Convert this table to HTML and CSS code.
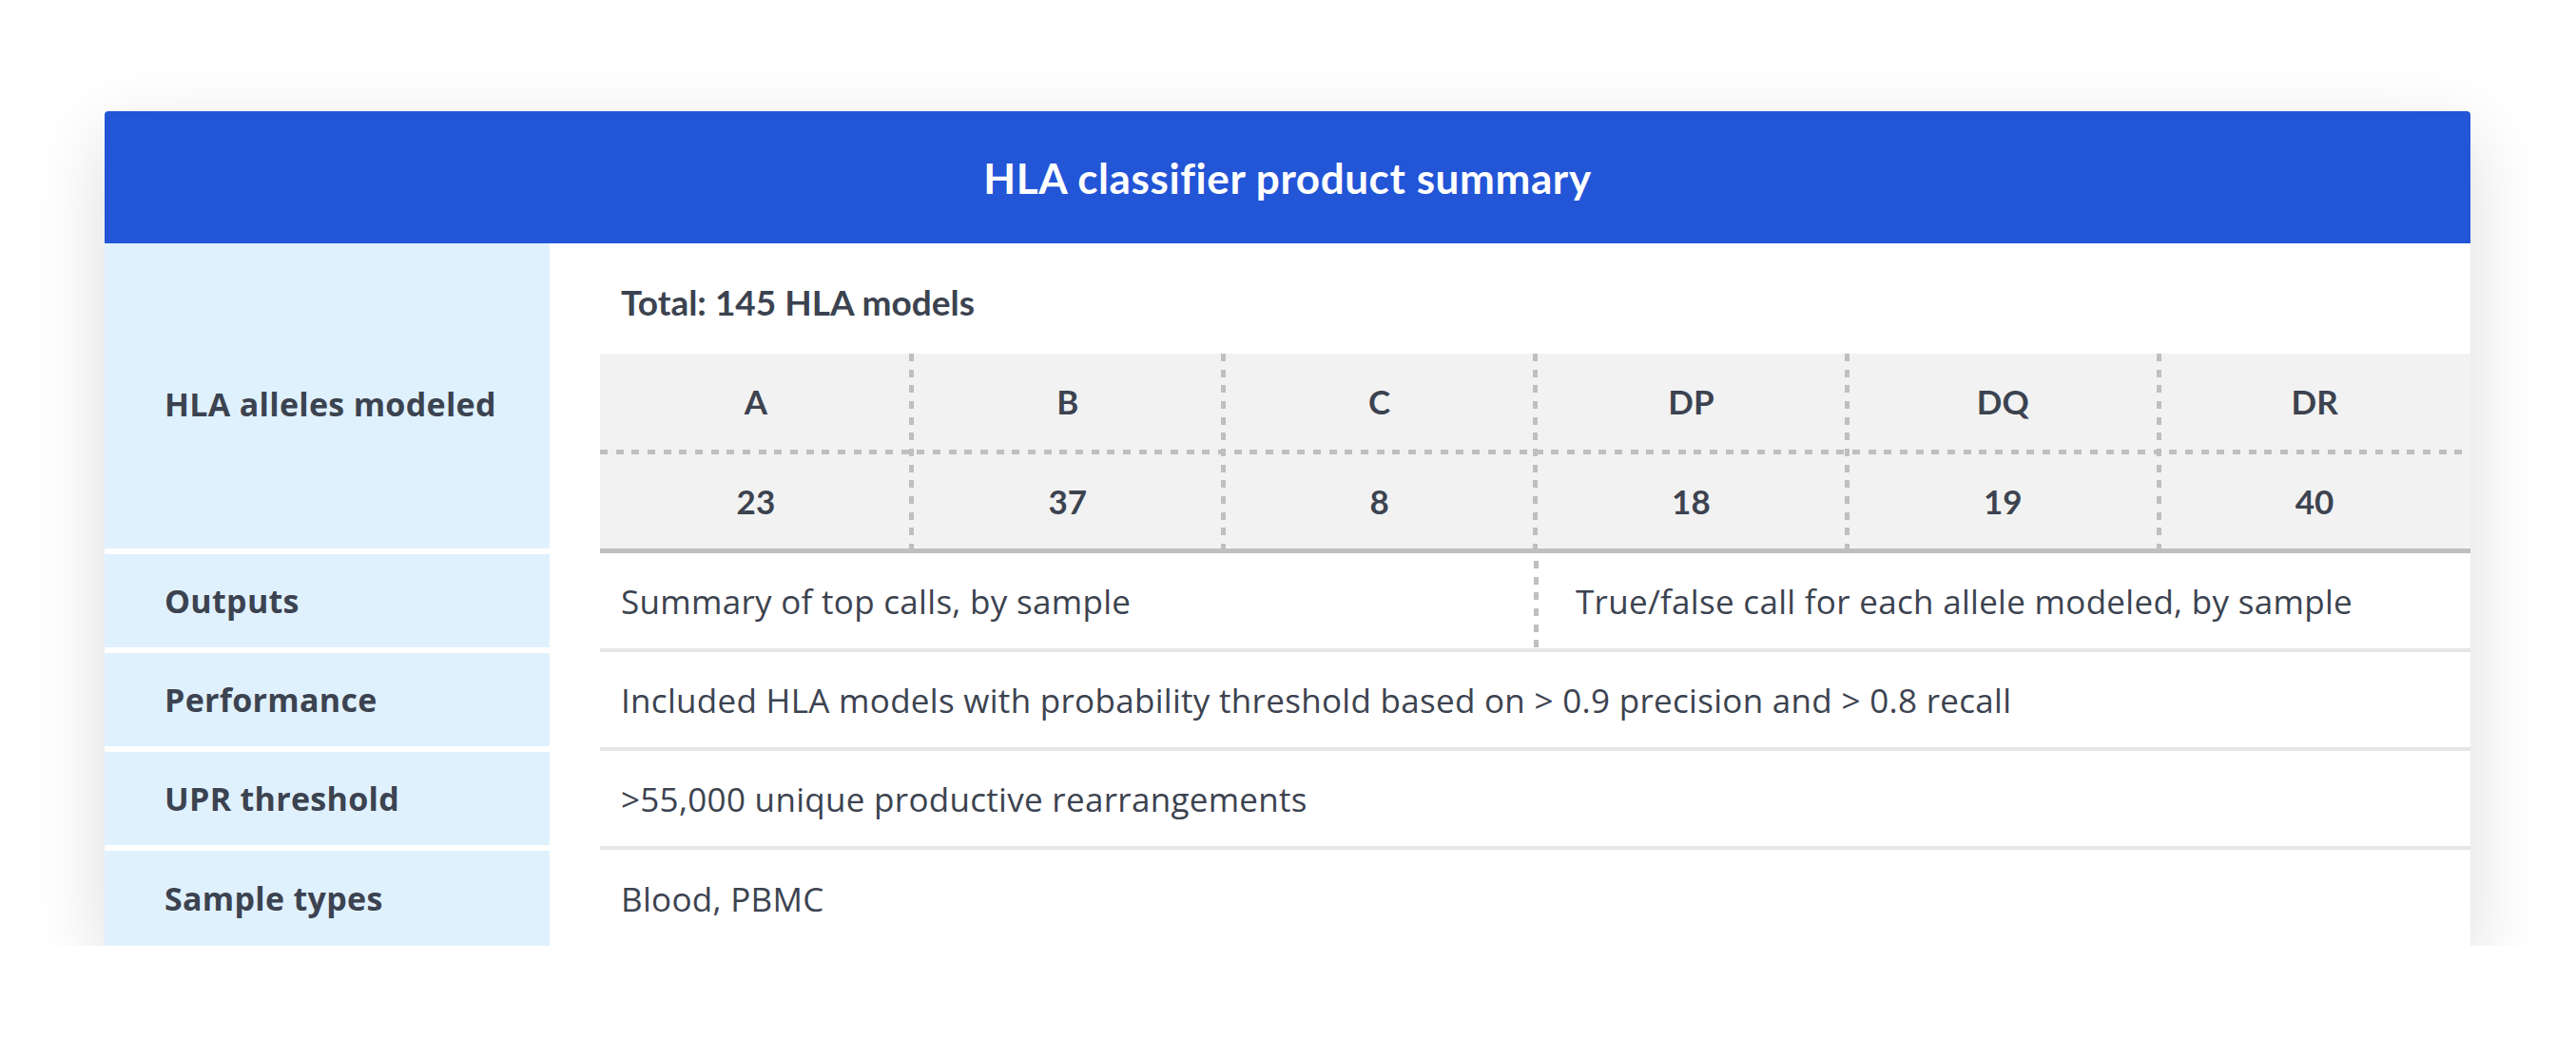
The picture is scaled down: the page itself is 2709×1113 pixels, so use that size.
FILE: index.html
```html
<!DOCTYPE html>
<html lang="en">
<head>
<meta charset="utf-8">
<title>HLA classifier product summary</title>
<link rel="stylesheet" href="styles.css">
</head>
<body>
<div class="page">
  <div class="card">
    <div class="card-head">HLA classifier product summary</div>

    <div class="row row-alleles">
      <div class="label label-alleles">HLA alleles modeled</div>
      <div class="content-alleles">
        <div class="total">Total: 145 HLA models</div>
        <div class="allele-table">
          <div class="cell">A</div>
          <div class="cell">B</div>
          <div class="cell">C</div>
          <div class="cell">DP</div>
          <div class="cell">DQ</div>
          <div class="cell">DR</div>
          <div class="cell val">23</div>
          <div class="cell val">37</div>
          <div class="cell val">8</div>
          <div class="cell val">18</div>
          <div class="cell val">19</div>
          <div class="cell val">40</div>
        </div>
      </div>
    </div>

    <div class="row">
      <div class="label">Outputs</div>
      <div class="content split">
        <div class="half">Summary of top calls, by sample</div>
        <div class="half half-right">True/false call for each allele modeled, by sample</div>
      </div>
    </div>

    <div class="row">
      <div class="label">Performance</div>
      <div class="content text">Included HLA models with probability threshold based on &gt; 0.9 precision and &gt; 0.8 recall</div>
    </div>

    <div class="row">
      <div class="label">UPR threshold</div>
      <div class="content text">&gt;55,000 unique productive rearrangements</div>
    </div>

    <div class="row row-last">
      <div class="label">Sample types</div>
      <div class="content text">Blood, PBMC</div>
    </div>
  </div>
</div>
</body>
</html>
```

FILE: styles.css
```css
* {
  box-sizing: border-box;
}

html, body {
  margin: 0;
  padding: 0;
  background: #ffffff;
}

body {
  font-family: "Open Sans", Lato, "Liberation Sans", sans-serif;
  color: #3c4350;
}

.page {
  padding: 117px 0 0 110px;
}

.card {
  width: 2488px;
  background: #ffffff;
  border-radius: 4px 4px 0 0;
  box-shadow: 0 24px 80px rgba(0, 0, 0, 0.14);
  overflow: hidden;
}

.card-head {
  height: 139px;
  background: #2355d7;
  color: #ffffff;
  font-family: Lato, "Open Sans", sans-serif;
  font-weight: 700;
  font-size: 44px;
  letter-spacing: 0.6px;
  line-height: 1;
  display: flex;
  align-items: center;
  justify-content: center;
}

.row {
  display: grid;
  grid-template-columns: 468px 1fr;
  column-gap: 53px;
  height: 104px;
}

.row-alleles {
  height: 327px;
}

.row-last {
  height: 100px;
}

.label {
  background: #e0f1fe;
  height: 98px;
  display: flex;
  align-items: center;
  padding-left: 63px;
  font-weight: 700;
  font-size: 34px;
  letter-spacing: 0.3px;
  line-height: 1;
}

.label-alleles {
  height: 321px;
  padding-top: 16px;
}

.row-last .label {
  height: 100px;
}

.content {
  height: 103px;
  border-bottom: 4px solid #e6e6e6;
  display: flex;
  align-items: center;
  font-size: 35px;
  letter-spacing: 0.3px;
  line-height: 1;
}

.row-last .content {
  height: 100px;
  border-bottom: none;
}

.text {
  padding-left: 22px;
}

.split {
  display: grid;
  grid-template-columns: 982px 1fr;
  align-items: stretch;
}

.half {
  display: flex;
  align-items: center;
  padding-left: 22px;
}

.half-right {
  padding-left: 44px;
  background: repeating-linear-gradient(to bottom, #bfbfbf 0 8px, transparent 8px 16.67px) 0 7px / 5px 100% no-repeat;
}

.total {
  height: 116px;
  padding: 43px 0 0 22px;
  font-family: Lato, "Open Sans", sans-serif;
  font-weight: 700;
  font-size: 37px;
  line-height: 1;
}

.allele-table {
  display: grid;
  grid-template-columns: repeat(6, 1fr);
  grid-template-rows: 101px 104px;
  background-color: #f2f2f2;
  border-bottom: 5px solid #bfbfbf;
  background-image:
    repeating-linear-gradient(to right, #bfbfbf 0 8px, transparent 8px 16.67px),
    repeating-linear-gradient(to bottom, #bfbfbf 0 8px, transparent 8px 16.67px),
    repeating-linear-gradient(to bottom, #bfbfbf 0 8px, transparent 8px 16.67px),
    repeating-linear-gradient(to bottom, #bfbfbf 0 8px, transparent 8px 16.67px),
    repeating-linear-gradient(to bottom, #bfbfbf 0 8px, transparent 8px 16.67px),
    repeating-linear-gradient(to bottom, #bfbfbf 0 8px, transparent 8px 16.67px);
  background-size:
    100% 5px,
    5px 100%,
    5px 100%,
    5px 100%,
    5px 100%,
    5px 100%;
  background-position:
    0 101px,
    325px 0,
    653px 0,
    981px 0,
    1309px 0,
    1637px 0;
  background-repeat: no-repeat;
}

.cell {
  display: flex;
  align-items: center;
  justify-content: center;
  font-family: Lato, "Open Sans", sans-serif;
  font-weight: 700;
  font-size: 35px;
  line-height: 1;
}

.cell.val {
  padding-top: 5px;
}
```
